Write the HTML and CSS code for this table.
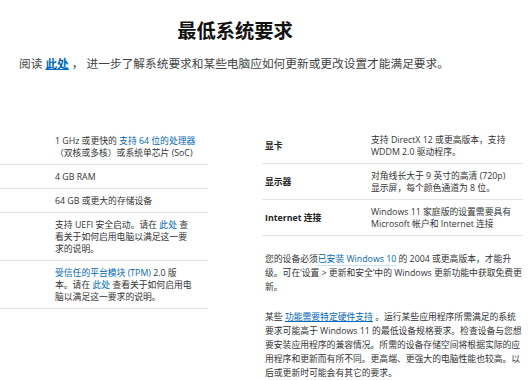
FILE: index.html
```html
<!DOCTYPE html>
<html lang="zh-CN">
<head>
<meta charset="utf-8">
<link rel="stylesheet" href="styles.css">
</head>
<body>
<header class="head">
  <h1 class="title">最低系统要求</h1>
  <p class="lead">阅读 <a class="lead-link" href="#">此处</a> ， 进一步了解系统要求和某些电脑应如何更新或更改设置才能满足要求。</p>
</header>
<main class="main">
  <section class="spec-left">
    <div class="lrow"><div class="lval">1 GHz 或更快的 <span class="link">支持 64 位的处理器</span><br>（双核或多核）或系统单芯片 (SoC)</div></div>
    <div class="lrow"><div class="lval">4 GB RAM</div></div>
    <div class="lrow"><div class="lval">64 GB 或更大的存储设备</div></div>
    <div class="lrow"><div class="lval">支持 UEFI 安全启动。请在 <span class="link">此处</span> 查<br>看关于如何启用电脑以满足这一要<br>求的说明。</div></div>
    <div class="lrow"><div class="lval"><span class="link">受信任的平台模块 (TPM)</span> 2.0 版<br>本。请在 <span class="link">此处</span> 查看关于如何启用电<br>脑以满足这一要求的说明。</div></div>
  </section>
  <section class="spec-right">
    <div class="rrow"><div class="rlabel">显卡</div><div class="rval">支持 DirectX 12 或更高版本，支持<br>WDDM 2.0 驱动程序。</div></div>
    <div class="rrow"><div class="rlabel">显示器</div><div class="rval">对角线长大于 9 英寸的高清 (720p)<br>显示屏，每个颜色通道为 8 位。</div></div>
    <div class="rrow"><div class="rlabel">Internet 连接</div><div class="rval">Windows 11 家庭版的设置需要具有<br>Microsoft 帐户和 Internet 连接</div></div>
    <p class="note">您的设备必须<span class="link-soft">已安装 Windows 10</span> 的 2004 或更高版本，才能升<br>级。可在‘设置 &gt; 更新和安全’中的 Windows 更新功能中获取免费更<br>新。</p>
    <p class="note">某些 <span class="link-u">功能需要特定硬件支持</span> 。运行某些应用程序所需满足的系统<br>要求可能高于 Windows 11 的最低设备规格要求。检查设备与您想<br>要安装应用程序的兼容情况。所需的设备存储空间将根据实际的应<br>用程序和更新而有所不同。更高端、更强大的电脑性能也较高。以<br>后或更新时可能会有其它的要求。</p>
  </section>
</main>
</body>
</html>
```
FILE: styles.css
```css
html, body {
  margin: 0;
  padding: 0;
  background: #ffffff;
  overflow: hidden;
}
body {
  font-family: "Open Sans", "Noto Sans CJK SC", sans-serif;
  color: #333333;
  width: 528px;
  height: 380px;
}
.head {
  width: 470px;
  padding-top: 18px;
}
.title {
  margin: 0;
  font-family: "Noto Sans CJK SC", sans-serif;
  font-size: 19.3px;
  line-height: 24px;
  font-weight: 700;
  color: #111111;
  text-align: center;
}
.lead {
  margin: 13px 0 0 19px;
  font-size: 11.7px;
  line-height: 16px;
  color: #444444;
  white-space: nowrap;
}
.lead-link {
  color: #0067b8;
  font-weight: 700;
  text-decoration: underline;
}
.main {
  display: grid;
  grid-template-columns: 208px 266px;
  column-gap: 54px;
  margin-top: 57px;
  font-size: 8.8px;
}
.link { color: #0067b8; }
.link-soft {
  color: #0067b8;
  border-bottom: 1px solid #cfe3f3;
}
.link-u {
  color: #0067b8;
  text-decoration: underline;
}
.spec-left {
  margin-top: 1px;
}
.lrow {
  padding: 6px 0 5px 55px;
  border-bottom: 1.5px solid #e4e4e4;
}
.lval {
  line-height: 12px;
  white-space: nowrap;
}
.rrow {
  display: grid;
  grid-template-columns: 109px 1fr;
  align-items: center;
  width: 261px;
  padding: 6px 0 5px;
  border-bottom: 1.5px solid #e4e4e4;
}
.rlabel {
  padding-left: 3px;
  font-weight: 700;
  color: #222222;
  line-height: 12px;
}
.rval {
  line-height: 12px;
  white-space: nowrap;
}
.note {
  margin: 16px 0 0 0;
  padding-left: 3px;
  line-height: 14px;
  color: #333333;
  white-space: nowrap;
}
```
